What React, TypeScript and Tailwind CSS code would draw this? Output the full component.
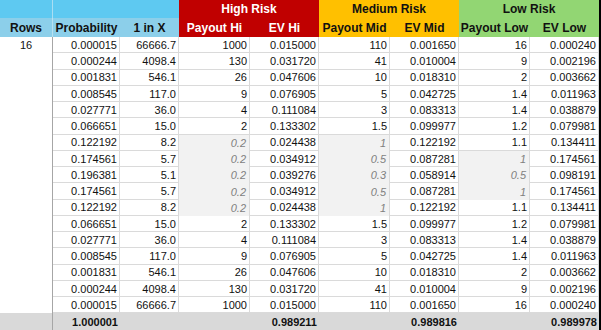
import React from "react";

const prob = ["0.000015", "0.000244", "0.001831", "0.008545", "0.027771", "0.066651", "0.122192", "0.174561", "0.196381", "0.174561", "0.122192", "0.066651", "0.027771", "0.008545", "0.001831", "0.000244", "0.000015"];
const oneIn = ["66666.7", "4098.4", "546.1", "117.0", "36.0", "15.0", "8.2", "5.7", "5.1", "5.7", "8.2", "15.0", "36.0", "117.0", "546.1", "4098.4", "66666.7"];
const payHi = ["1000", "130", "26", "9", "4", "2", "0.2", "0.2", "0.2", "0.2", "0.2", "2", "4", "9", "26", "130", "1000"];
const evHi = ["0.015000", "0.031720", "0.047606", "0.076905", "0.111084", "0.133302", "0.024438", "0.034912", "0.039276", "0.034912", "0.024438", "0.133302", "0.111084", "0.076905", "0.047606", "0.031720", "0.015000"];
const payMid = ["110", "41", "10", "5", "3", "1.5", "1", "0.5", "0.3", "0.5", "1", "1.5", "3", "5", "10", "41", "110"];
const evMid = ["0.001650", "0.010004", "0.018310", "0.042725", "0.083313", "0.099977", "0.122192", "0.087281", "0.058914", "0.087281", "0.122192", "0.099977", "0.083313", "0.042725", "0.018310", "0.010004", "0.001650"];
const payLow = ["16", "9", "2", "1.4", "1.4", "1.2", "1.1", "1", "0.5", "1", "1.1", "1.2", "1.4", "1.4", "2", "9", "16"];
const evLow = ["0.000240", "0.002196", "0.003662", "0.011963", "0.038879", "0.079981", "0.134411", "0.174561", "0.098191", "0.174561", "0.134411", "0.079981", "0.038879", "0.011963", "0.003662", "0.002196", "0.000240"];

function Cell({ value, shaded }: { value: string; shaded?: boolean }) {
  if (shaded) {
    return (
      <div className="flex items-center justify-end pr-[3px] pt-px bg-[#f2f2f2] border-r border-[#dadada] italic text-[#7f7f7f]">
        {value}
      </div>
    );
  }
  return (
    <div className="flex items-center justify-end pr-[2px] pt-px bg-white border-r border-b border-[#dadada]">
      {value}
    </div>
  );
}

export default function App() {
  const hdr = "flex items-center justify-center font-bold text-[12px]";
  return (
    <div className="w-[601px] h-[330px] bg-black">
      <div
        className="grid w-[599px] h-[328px] bg-white text-[11px] text-[#111] grid-cols-[53px_67px_59px_71px_69px_71px_69px_71px_69px] grid-rows-[18px_19px_repeat(17,16.25px)_1fr]"
        style={{ fontFamily: '"Liberation Sans", Arial, sans-serif' }}
      >
        {/* group header */}
        <div className="bg-[#5ec9f1] border-r border-[#a9def3]" />
        <div className="col-span-2 bg-[#5ec9f1]" />
        <div className={`${hdr} col-span-2 bg-[#c00000] text-white`}>High Risk</div>
        <div className={`${hdr} col-span-2 bg-[#ffc000]`}>Medium Risk</div>
        <div className={`${hdr} col-span-2 bg-[#92d673]`}>Low Risk</div>

        {/* column header */}
        <div className={`${hdr} bg-[#8ccfea] border-r border-[#b8e1f1]`}>Rows</div>
        <div className={`${hdr} bg-[#8ccfea]`}>Probability</div>
        <div className={`${hdr} bg-[#8ccfea]`}>1 in X</div>
        <div className={`${hdr} bg-[#c00000] text-white`}>Payout Hi</div>
        <div className={`${hdr} bg-[#c00000] text-white`}>EV Hi</div>
        <div className={`${hdr} bg-[#ffc000]`}>Payout Mid</div>
        <div className={`${hdr} bg-[#ffc000]`}>EV Mid</div>
        <div className={`${hdr} bg-[#92d673]`}>Payout Low</div>
        <div className={`${hdr} bg-[#92d673]`}>EV Low</div>

        {/* rows column */}
        <div className="row-span-17 border-r border-[#a6a6a6] bg-white">
          <div className="h-[16.25px] pt-px flex items-center justify-center">16</div>
        </div>

        {prob.map((p, i) => (
          <React.Fragment key={i}>
            <Cell value={p} />
            <Cell value={oneIn[i]} />
            <Cell value={payHi[i]} shaded={i >= 6 && i <= 10} />
            <Cell value={evHi[i]} />
            <Cell value={payMid[i]} shaded={i >= 6 && i <= 10} />
            <Cell value={evMid[i]} />
            <Cell value={payLow[i]} shaded={i >= 7 && i <= 9} />
            <Cell value={evLow[i]} />
          </React.Fragment>
        ))}

        {/* totals */}
        <div className="bg-[#d9d9d9] border-r border-[#a6a6a6]" />
        <div className="col-span-8 grid grid-cols-[67px_59px_71px_69px_71px_69px_71px_69px] bg-[#d9d9d9] font-bold">
          <div className="flex items-center justify-end pr-[2px] pt-px">1.000001</div>
          <div />
          <div />
          <div className="flex items-center justify-end pr-[2px] pt-px">0.989211</div>
          <div />
          <div className="flex items-center justify-end pr-[2px] pt-px">0.989816</div>
          <div />
          <div className="flex items-center justify-end pr-[2px] pt-px">0.989978</div>
        </div>
      </div>
    </div>
  );
}
